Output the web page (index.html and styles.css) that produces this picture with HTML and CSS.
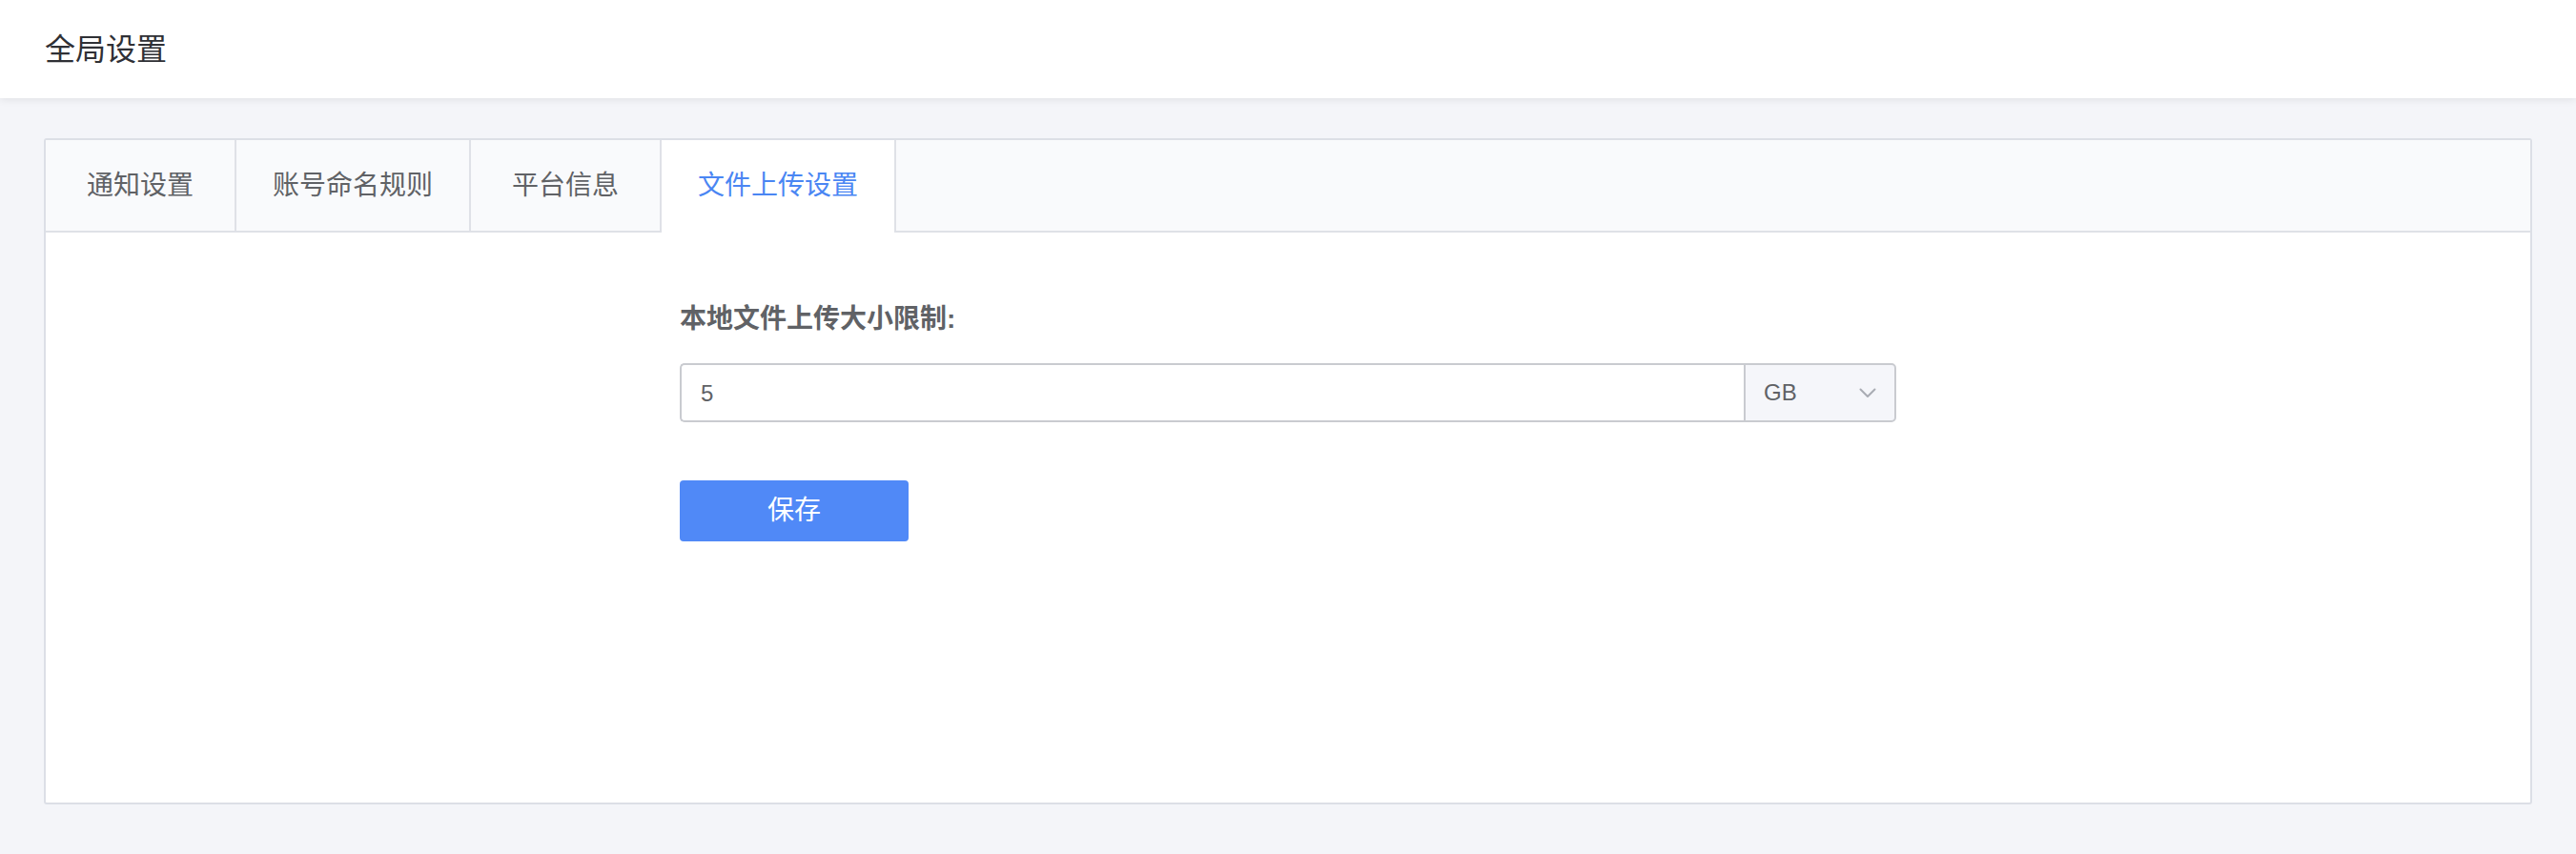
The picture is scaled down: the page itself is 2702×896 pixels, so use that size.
FILE: index.html
```html
<!DOCTYPE html>
<html lang="zh-CN">
<head>
<meta charset="utf-8">
<title>全局设置</title>
<link rel="stylesheet" href="styles.css">
</head>
<body>
  <header class="page-header">
    <h1 class="page-title">全局设置</h1>
  </header>
  <main class="page-main">
    <section class="card">
      <nav class="tabs">
        <div class="tab">通知设置</div>
        <div class="tab">账号命名规则</div>
        <div class="tab">平台信息</div>
        <div class="tab tab-active">文件上传设置</div>
      </nav>
      <div class="tab-body">
        <form class="upload-form">
          <label class="form-label">本地文件上传大小限制:</label>
          <div class="input-group">
            <div class="input-field">5</div>
            <div class="unit-select">
              <span class="unit-text">GB</span>
              <svg class="chevron" width="18" height="11" viewBox="0 0 18 11">
                <polyline points="1.5,1.5 9,9 16.5,1.5" fill="none" stroke="#a9acb3" stroke-width="2" stroke-linecap="round" stroke-linejoin="round"/>
              </svg>
            </div>
          </div>
          <button type="button" class="save-btn">保存</button>
        </form>
      </div>
    </section>
  </main>
</body>
</html>
```

FILE: styles.css
```css
* {
  box-sizing: border-box;
}

html, body {
  margin: 0;
  padding: 0;
}

body {
  width: 2702px;
  height: 896px;
  background: #f4f5f9;
  font-family: "Liberation Sans", "Noto Sans CJK SC", sans-serif;
  overflow: hidden;
}

.page-header {
  height: 103px;
  background: #ffffff;
  box-shadow: 0 2px 8px rgba(0, 0, 0, 0.08);
  display: flex;
  align-items: center;
  padding-left: 47px;
  position: relative;
  z-index: 1;
}

.page-title {
  margin: 0;
  font-size: 32px;
  font-weight: 400;
  line-height: 40px;
  color: #2f3035;
}

.page-main {
  padding: 42px 46px 0 46px;
}

.card {
  height: 699px;
  background: #ffffff;
  border: 2px solid #dcdfe6;
  border-radius: 3px;
  overflow: hidden;
}

.tabs {
  display: flex;
  align-items: flex-start;
  height: 97px;
  background: #f9fafc;
  border-bottom: 2px solid #dfe1e7;
}

.tab {
  height: 95px;
  min-width: 200px;
  padding: 0 38px;
  border-right: 2px solid #dfe1e7;
  text-align: center;
  font-size: 28px;
  line-height: 95px;
  color: #606266;
}

.tab-active {
  height: 97px;
  background: #ffffff;
  color: #4a86f3;
}

.tab-body {
  padding-top: 71px;
  display: flex;
  justify-content: center;
}

.upload-form {
  width: 1276px;
  display: flex;
  flex-direction: column;
  align-items: flex-start;
}

.form-label {
  display: block;
  font-size: 28px;
  font-weight: 700;
  line-height: 40px;
  color: #606266;
}

.input-group {
  margin-top: 26px;
  width: 100%;
  height: 62px;
  display: flex;
}

.input-field {
  flex: 1;
  height: 100%;
  border: 2px solid #c9cbd0;
  border-right: none;
  border-radius: 5px 0 0 5px;
  padding-left: 20px;
  font-size: 24px;
  line-height: 60px;
  color: #606266;
  background: #ffffff;
}

.unit-select {
  width: 160px;
  height: 100%;
  border: 2px solid #c9cbd0;
  border-radius: 0 5px 5px 0;
  background: #f5f6fa;
  display: flex;
  align-items: center;
  justify-content: space-between;
  padding: 0 19px 0 19px;
}

.unit-text {
  font-size: 24px;
  color: #606266;
  line-height: 58px;
}

.chevron {
  display: block;
}

.save-btn {
  margin-top: 61px;
  width: 240px;
  height: 64px;
  border: none;
  border-radius: 4px;
  background: #5089f7;
  color: #ffffff;
  font-family: "Liberation Sans", "Noto Sans CJK SC", sans-serif;
  font-size: 28px;
  line-height: 64px;
  padding: 0;
  cursor: pointer;
}
```
